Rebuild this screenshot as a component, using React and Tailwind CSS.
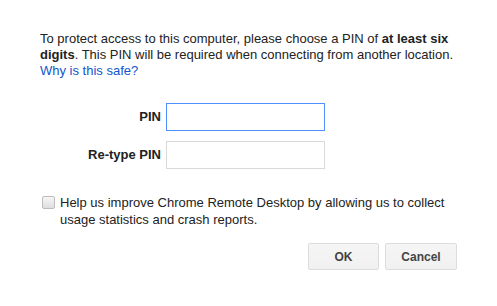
import React from "react";

export default function App() {
  return (
    <div className="w-[497px] h-[306px] bg-white font-['Liberation_Sans',Arial,sans-serif] text-[13px] text-[#222]">
      <div className="px-10 pt-[31px]">
        {/* intro */}
        <p className="leading-4">
          To protect access to this computer, please choose a PIN of{" "}
          <b>at least six digits</b>. This PIN will be required when connecting from another location.{" "}
          <a href="#" className="text-[#1155cc]">Why is this safe?</a>
        </p>

        {/* pin fields */}
        <div className="mt-6 flex flex-col gap-[10px]">
          <div className="flex items-center gap-[5px]">
            <label className="w-[121px] text-right font-bold">PIN</label>
            <input
              type="password"
              className="w-[159px] h-[28px] border border-[#4d90fe] outline-none px-1"
            />
          </div>
          <div className="flex items-center gap-[5px]">
            <label className="w-[121px] text-right font-bold">Re-type PIN</label>
            <input
              type="password"
              className="w-[159px] h-[28px] border border-[#d9d9d9] outline-none px-1"
            />
          </div>
        </div>

        {/* consent */}
        <label className="mt-[25px] flex items-start gap-[5px] leading-[17px]">
          <span className="mt-[2px] ml-[2px] w-[13px] h-[13px] shrink-0 rounded-[2px] border border-[#bcbcbc] bg-gradient-to-b from-[#f6f6f6] to-[#dedede]" />
          <span>
            Help us improve Chrome Remote Desktop by allowing us to collect usage statistics and crash reports.
          </span>
        </label>

        {/* actions */}
        <div className="mt-[15px] flex justify-end gap-[6px]">
          <button className="w-[71px] h-[27px] rounded-[2px] border border-[#dcdcdc] bg-gradient-to-b from-[#f5f5f5] to-[#f1f1f1] text-[12px] font-bold text-[#444]">
            OK
          </button>
          <button className="w-[72px] h-[27px] rounded-[2px] border border-[#dcdcdc] bg-gradient-to-b from-[#f5f5f5] to-[#f1f1f1] text-[12px] font-bold text-[#444]">
            Cancel
          </button>
        </div>
      </div>
    </div>
  );
}
